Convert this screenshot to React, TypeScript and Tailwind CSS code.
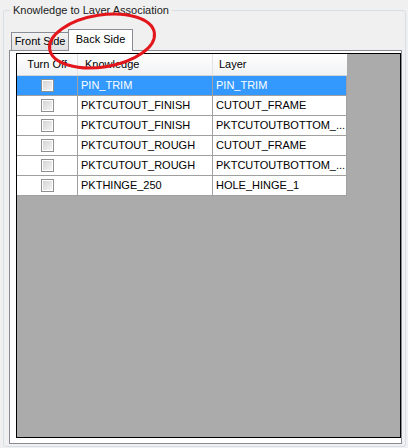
import React from "react"

const rows = [
  { knowledge: "PIN_TRIM", layer: "PIN_TRIM", selected: true },
  { knowledge: "PKTCUTOUT_FINISH", layer: "CUTOUT_FRAME" },
  { knowledge: "PKTCUTOUT_FINISH", layer: "PKTCUTOUTBOTTOM_..." },
  { knowledge: "PKTCUTOUT_ROUGH", layer: "CUTOUT_FRAME" },
  { knowledge: "PKTCUTOUT_ROUGH", layer: "PKTCUTOUTBOTTOM_..." },
  { knowledge: "PKTHINGE_250", layer: "HOLE_HINGE_1" },
]

function CheckBox() {
  return (
    <div className="w-[13px] h-[13px] border border-[#8e8f8f] bg-white p-px">
      <div className="w-full h-full bg-linear-to-br from-[#d4d4d4] to-[#f4f4f4]" />
    </div>
  )
}

export default function App() {
  return (
    <div
      className="relative w-[408px] h-[448px] bg-[#f0f0f0] pt-[10px] text-[11px] text-black overflow-hidden"
      style={{ fontFamily: '"Liberation Sans", Arial, sans-serif' }}
    >
      {/* Group box */}
      <div className="relative ml-[3px] mr-[2px] h-[437px] border border-[#d5dfe5] rounded-[3px] pt-[18px] pl-[5px] pr-[3px]">
        <span className="absolute left-[6px] -top-[7px] px-[3px] leading-[13px] bg-[#f0f0f0] text-[#1a1a1a]">
          Knowledge to Layer Association
        </span>

        {/* Tabs */}
        <div className="h-[21px] flex items-end pl-[2px]">
          <div className="w-[58px] h-[18px] border border-b-0 border-[#898c95] bg-linear-to-b from-[#f2f2f2] to-[#e1e1e1] flex items-center justify-center leading-none">
            Front Side
          </div>
          <div className="relative z-10 -ml-px -mb-px w-[65px] h-[22px] border border-b-0 border-[#898c95] bg-white flex items-center justify-center leading-none pb-[2px]">
            Back Side
          </div>
        </div>

        {/* Tab page */}
        <div className="h-[394px] border border-[#898c95] bg-white pt-[2px] pl-[6px]">
          <div className="w-[385px] h-[385px] border border-black bg-[#ababab]">
            <div className="w-[330px]">
              <div className="flex h-[22px] bg-linear-to-b from-white to-[#f1f2f4] border-b border-[#d5d5d5]">
                <div className="w-[61px] border-r border-[#e3e3e3] flex items-center justify-center">Turn Off</div>
                <div className="w-[135px] border-r border-[#e3e3e3] flex items-center pl-[7px]">Knowledge</div>
                <div className="w-[134px] flex items-center pl-[6px]">Layer</div>
              </div>
              {rows.map((r, i) => (
                <div
                  key={i}
                  className={
                    r.selected
                      ? "flex h-[20px] bg-[#3399ff] text-white border-b border-[#a0a0a0]"
                      : "flex h-[20px] bg-white border-b border-[#a0a0a0]"
                  }
                >
                  <div className="w-[61px] border-r border-[#a0a0a0] flex items-center justify-center">
                    <CheckBox />
                  </div>
                  <div className="w-[135px] border-r border-[#a0a0a0] flex items-center pl-[3px] whitespace-nowrap overflow-hidden">
                    {r.knowledge}
                  </div>
                  <div className="w-[134px] border-r border-[#a0a0a0] flex items-center pl-[3px] whitespace-nowrap overflow-hidden">
                    {r.layer}
                  </div>
                </div>
              ))}
            </div>
          </div>
        </div>
      </div>

      {/* red annotation */}
      <svg className="absolute left-0 top-0 pointer-events-none" width="408" height="448">
        <ellipse
          cx="102"
          cy="41"
          rx="53"
          ry="26"
          transform="rotate(-9 102 41)"
          fill="none"
          stroke="#e3161c"
          strokeWidth="3"
        />
      </svg>
    </div>
  )
}
